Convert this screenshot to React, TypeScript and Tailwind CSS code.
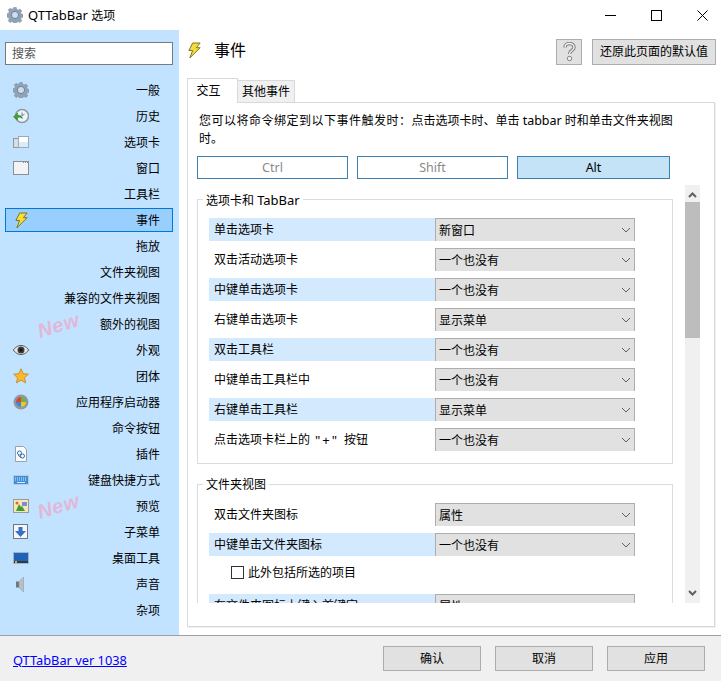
import { ReactNode } from "react";

function Gear({ size = 16 }: { size?: number }) {
  return (
    <svg width={size} height={size} viewBox="0 0 16 16">
      <path
        d="M6.7 0.5h2.6l.4 2 1.5.6 1.7-1.1 1.9 1.9-1.1 1.7.6 1.5 2 .4v2.6l-2 .4-.6 1.5 1.1 1.7-1.9 1.9-1.7-1.1-1.5.6-.4 2H6.7l-.4-2-1.5-.6-1.7 1.1-1.9-1.9 1.1-1.7-.6-1.5-2-.4V6.700l2-.4.6-1.5L1.200 3.100l1.900-1.900 1.700 1.100 1.500-.6z"
        fill="#8fa3b8"
        stroke="#74879b"
        strokeWidth="0.5"
      />
      <circle cx="8" cy="8" r="3.600" fill="#d3dce5" stroke="#6f8296" />
    </svg>
  );
}

function History() {
  return (
    <svg width="16" height="16" viewBox="0 0 16 16">
      <circle cx="9" cy="8" r="6.500" fill="#eef4f8" stroke="#8e9aa6" strokeWidth="1.500" />
      <path d="M9 4.500V8l2.500-2" fill="none" stroke="#6d7f90" />
      <path d="M0.500 9l4-4v2.200c3 0 4.500 1 5 3.300-1.500-1.200-3-1.500-5-1.200V12z" fill="#3aa52c" stroke="#1f7a1a" strokeWidth="0.500" />
    </svg>
  );
}

function TabIcon() {
  return (
    <svg width="16" height="16" viewBox="0 0 16 16">
      <rect x="0.500" y="4.500" width="6" height="9" fill="#d6dde3" stroke="#8f979e" />
      <rect x="5.500" y="2.500" width="10" height="11" fill="#ffffff" stroke="#a1a8ae" />
      <rect x="6" y="8" width="9" height="5" fill="#d9ecfb" />
    </svg>
  );
}

function WindowIcon() {
  return (
    <svg width="16" height="16" viewBox="0 0 16 16">
      <rect x="0.500" y="1.500" width="15" height="13" fill="#f3f3f5" stroke="#8e8e92" />
      <path d="M10 2.500h1M12 2.500h1M14 2.500h1" stroke="#8e8e92" />
    </svg>
  );
}

function Bolt() {
  return (
    <svg width="15" height="17" viewBox="0 0 16 18">
      <path d="M6 1h8l-4 5h4L3 17l3-8H2z" fill="#f7dc3c" stroke="#77701c" strokeLinejoin="round" />
    </svg>
  );
}

function Eye() {
  return (
    <svg width="16" height="16" viewBox="0 0 16 16">
      <path d="M0.300 8C3 4.500 5.500 3.500 8 3.500s5 1 7.700 4.500C13 11.500 10.500 12.500 8 12.500S3 11.500 0.300 8z" fill="#e8e8e8" stroke="#555555" />
      <circle cx="8" cy="8" r="3.500" fill="#3c3c3c" />
      <circle cx="8" cy="8" r="1.500" fill="#111111" />
    </svg>
  );
}

function Star() {
  return (
    <svg width="16" height="16" viewBox="0 0 16 16">
      <path d="M8 0.800l2.200 4.800 5.200.6-3.900 3.500 1.100 5.200L8 12.200l-4.600 2.700 1.100-5.200L.6 6.200l5.200-.6z" fill="#fbb82a" stroke="#b77c12" strokeWidth="0.700" />
    </svg>
  );
}

function Orb() {
  return (
    <svg width="16" height="16" viewBox="0 0 16 16">
      <circle cx="8" cy="8" r="7.500" fill="#8d9aa3" />
      <path d="M8 8V3a5 5 0 0 0-5 5z" fill="#e2412c" />
      <path d="M8 8V3a5 5 0 0 1 5 5z" fill="#6cb33f" />
      <path d="M8 8H3a5 5 0 0 0 5 5z" fill="#3b87d8" />
      <path d="M8 8h5a5 5 0 0 1-5 5z" fill="#f5c518" />
    </svg>
  );
}

function Plugin() {
  return (
    <svg width="16" height="16" viewBox="0 0 16 16">
      <path d="M2.500 0.500h8l3 3v12h-11z" fill="#fbfcfd" stroke="#9aa1a7" />
      <circle cx="6.500" cy="7" r="2" fill="none" stroke="#2f6fb0" />
      <circle cx="9.500" cy="10" r="2" fill="none" stroke="#2f6fb0" />
      <path d="M5 9l3 3" stroke="#5f7f9f" />
    </svg>
  );
}

function Keyboard() {
  return (
    <svg width="16" height="16" viewBox="0 0 16 16">
      <rect x="0.500" y="3.500" width="15" height="9" fill="#3f8edb" stroke="#b9cbd9" />
      <path d="M2 6h12M2 8h12" stroke="#dcecf9" strokeDasharray="1 1" />
      <path d="M4 10.500h8" stroke="#dcecf9" />
    </svg>
  );
}

function Picture() {
  return (
    <svg width="16" height="16" viewBox="0 0 16 16">
      <rect x="0.500" y="1.500" width="15" height="13" fill="#f3e8b6" stroke="#9a9a9a" />
      <rect x="9" y="4" width="5" height="4" fill="#8b86d8" />
      <path d="M3 13l3-7 2 3 1-1 3 5z" fill="#3e9c35" />
      <circle cx="4" cy="5" r="1.500" fill="#e5662a" />
    </svg>
  );
}

function DownArrow() {
  return (
    <svg width="16" height="16" viewBox="0 0 16 16">
      <rect x="0.500" y="0.500" width="14" height="14" fill="#f4f7fa" stroke="#6f7780" />
      <path d="M5.500 3h4v4H13l-5.500 6L2 7h3.500z" fill="#3a70c4" />
    </svg>
  );
}

function Monitor() {
  return (
    <svg width="16" height="16" viewBox="0 0 16 16">
      <rect x="0.500" y="2.500" width="15" height="11" fill="#1f63b8" stroke="#a5b4c2" />
      <rect x="1" y="11" width="14" height="2" fill="#303a45" />
      <rect x="2" y="11" width="2" height="2" fill="#e8a52c" />
    </svg>
  );
}

function Speaker() {
  return (
    <svg width="16" height="16" viewBox="0 0 16 16">
      <rect x="3" y="5.500" width="3" height="6" fill="#70767c" />
      <path d="M6 5.500L10.500 1v15L6 11.500z" fill="#b8bec4" stroke="#8f959b" strokeWidth="0.500" />
    </svg>
  );
}

function Chevron() {
  return (
    <svg width="10" height="6" viewBox="0 0 10 6" className="text-[#606060]">
      <path d="M1 1l4 4 4-4" fill="none" stroke="currentColor" />
    </svg>
  );
}

const helpGlyph = "M3 5.500C3 3 5 1.500 7.500 1.500S12 3 12 5.500c0 3-4.500 3-4.500 6.500";

function HelpIcon() {
  return (
    <svg width="15" height="20" viewBox="0 0 15 20">
      <path d={helpGlyph} fill="none" stroke="#7d7d7d" strokeWidth="3.400" />
      <path d={helpGlyph} fill="none" stroke="#f4f4f4" strokeWidth="1.400" />
      <circle cx="7.500" cy="16.500" r="2.200" fill="#f4f4f4" stroke="#7d7d7d" />
    </svg>
  );
}

const navItems: { label: string; icon?: ReactNode; active?: boolean }[] = [
  { label: "一般", icon: <Gear /> },
  { label: "历史", icon: <History /> },
  { label: "选项卡", icon: <TabIcon /> },
  { label: "窗口", icon: <WindowIcon /> },
  { label: "工具栏" },
  { label: "事件", icon: <Bolt />, active: true },
  { label: "拖放" },
  { label: "文件夹视图" },
  { label: "兼容的文件夹视图" },
  { label: "额外的视图" },
  { label: "外观", icon: <Eye /> },
  { label: "团体", icon: <Star /> },
  { label: "应用程序启动器", icon: <Orb /> },
  { label: "命令按钮" },
  { label: "插件", icon: <Plugin /> },
  { label: "键盘快捷方式", icon: <Keyboard /> },
  { label: "预览", icon: <Picture /> },
  { label: "子菜单", icon: <DownArrow /> },
  { label: "桌面工具", icon: <Monitor /> },
  { label: "声音", icon: <Speaker /> },
  { label: "杂项" },
];

function NewBadge({ className }: { className: string }) {
  return (
    <span
      className={`absolute left-[37px] -rotate-[17deg] text-[20px] leading-none font-bold italic tracking-[0.5px] text-[#e0b8da] ${className}`}
      style={{ fontFamily: '"Liberation Sans", sans-serif' }}
    >
      New
    </span>
  );
}

function Row({ label, value, shaded }: { label: ReactNode; value: string; shaded?: boolean }) {
  return (
    <div className="flex h-[23px] w-[426px]">
      <div className={`flex w-[226px] items-center pl-[5px] ${shaded ? "bg-[#d3e9fd]" : ""}`}>{label}</div>
      <div className="flex w-[200px] items-center justify-between border border-b-0 border-[#adadad] bg-[#e1e1e1] pl-[3px] pr-[3px]">
        <span className="pt-[1px]">{value}</span>
        <Chevron />
      </div>
    </div>
  );
}

function Group({ title, children, className }: { title: ReactNode; children: ReactNode; className: string }) {
  return (
    <div className={`relative w-[476px] border border-[#dcdcdc] pl-[11px] ${className}`}>
      <span className="absolute -top-[9px] left-[5px] bg-white px-[3px] leading-[18px]">{title}</span>
      {children}
    </div>
  );
}

const tabRows: [ReactNode, string][] = [
  ["单击选项卡", "新窗口"],
  ["双击活动选项卡", "一个也没有"],
  ["中键单击选项卡", "一个也没有"],
  ["右键单击选项卡", "显示菜单"],
  ["双击工具栏", "一个也没有"],
  ["中键单击工具栏中", "一个也没有"],
  ["右键单击工具栏", "显示菜单"],
  [
    <>
      点击选项卡栏上的<span className="px-[5px] text-[13px] tracking-[2px]">"+"</span>按钮
    </>,
    "一个也没有",
  ],
];

export default function App() {
  return (
    <div
      className="flex h-[681px] w-[721px] flex-col overflow-hidden bg-white text-[12px] leading-[18px] text-black"
      style={{ fontFamily: '"Noto Sans", "Noto Sans CJK SC", sans-serif' }}
    >
      {/* TITLE BAR */}
      <div className="flex h-[30px] items-center pl-[7px]">
        <Gear />
        <span className="ml-[5px] text-[13px]">
          QTTabBar <span className="text-[12px]">选项</span>
        </span>
        <div className="ml-auto -mr-[4px] flex items-center">
          <div className="flex w-[46px] justify-center">
            <svg width="11" height="11" viewBox="0 0 11 11"><path d="M0 5.500h11" stroke="#000" /></svg>
          </div>
          <div className="flex w-[46px] justify-center">
            <svg width="11" height="11" viewBox="0 0 11 11"><rect x="0.500" y="0.500" width="10" height="10" fill="none" stroke="#000" /></svg>
          </div>
          <div className="flex w-[46px] justify-center">
            <svg width="11" height="11" viewBox="0 0 11 11"><path d="M0.500 0.500l10 10M10.500 0.500l-10 10" stroke="#000" /></svg>
          </div>
        </div>
      </div>

      <div className="flex h-[605px]">
        {/* SIDEBAR */}
        <div className="relative w-[179px] bg-[#c2e3ff] pl-[5px] pr-[6px] pt-[12px]">
          <div className="flex h-[23px] w-[168px] items-center border border-[#7a7a7a] bg-white pl-[6px] text-[#555555]">搜索</div>
          <div className="mt-[13px] flex flex-col gap-[2px]">
            {navItems.map((item) => (
              <div
                key={item.label}
                className={`flex h-[24px] items-center justify-between border pl-[6px] pr-[12px] ${
                  item.active ? "border-[#0078d7] bg-[#99cfff]" : "border-transparent"
                }`}
              >
                <span className="flex w-[18px] justify-center">{item.icon}</span>
                <span className="pt-[1px]">{item.label}</span>
              </div>
            ))}
          </div>
          <NewBadge className="top-[285px]" />
          <NewBadge className="top-[466px]" />
        </div>

        {/* MAIN */}
        <div className="flex-1 pl-[8px] pr-[5px]">
          <div className="flex h-[48px] items-center pb-[4px]">
            <div className="flex items-center pb-[4px]">
              <Bolt />
              <span className="ml-[12px] text-[16px]">事件</span>
            </div>
            <div className="ml-auto flex gap-[10px]">
              <div className="flex h-[26px] w-[26px] items-center justify-center border border-[#adadad] bg-[#e1e1e1]">
                <HelpIcon />
              </div>
              <div className="flex h-[26px] w-[124px] items-center justify-center border border-[#adadad] bg-[#e1e1e1]">还原此页面的默认值</div>
            </div>
          </div>

          <div className="relative z-10 flex h-[24px] items-end">
            <div className="-mb-px flex h-[25px] w-[51px] items-center justify-center border border-b-0 border-[#d9d9d9] bg-white pr-[8px]">交互</div>
            <div className="flex h-[22px] w-[57px] items-center justify-center border border-l-0 border-b-0 border-[#d9d9d9] bg-[#f0f0f0]">其他事件</div>
          </div>

          <div className="h-[525px] w-[528px] border border-[#d9d9d9] pl-[9px] pt-[9px] shadow-[1px_1px_0_#f0f0f0]">
            <p className="w-[490px] pl-[2px]">
              <span className="tracking-[0.5px]">您可以将命令绑定到以下事件触发时：</span>点击选项卡时、单击 <span className="text-[12.5px]">tabbar</span> 时和单击文件夹视图
              <br />
              时。
            </p>

            <div className="mt-[8px] flex w-[473px] gap-[9px] text-[12.5px]">
              <div className="flex h-[23px] w-[151px] items-center justify-center border border-[#3c7fb1] text-[#8a8a8a]">Ctrl</div>
              <div className="flex h-[23px] w-[151px] items-center justify-center border border-[#3c7fb1] text-[#8a8a8a]">Shift</div>
              <div className="flex h-[23px] w-[153px] items-center justify-center border border-[#3c7fb1] bg-[#c4e3f7]">Alt</div>
            </div>

            <div className="mt-[6px] flex h-[418px] w-[503px] justify-between overflow-hidden">
              <div className="pt-[14px]">
                <Group
                  title={
                    <>
                      选项卡和 <span className="text-[13px]">TabBar</span>
                    </>
                  }
                  className="flex h-[265px] flex-col gap-[7px] pt-[18px]"
                >
                  {tabRows.map(([label, value], i) => (
                    <Row key={i} label={label} value={value} shaded={i % 2 === 0} />
                  ))}
                </Group>
                <Group title="文件夹视图" className="mt-[20px] h-[200px] pt-[18px]">
                  <Row label="双击文件夹图标" value="属性" />
                  <div className="mt-[7px]">
                    <Row label="中键单击文件夹图标" value="一个也没有" shaded />
                  </div>
                  <label className="ml-[22px] mt-[5px] flex h-[23px] items-center">
                    <span className="mr-[4px] h-[13px] w-[13px] border border-[#333333] bg-white" />
                    此外包括所选的项目
                  </label>
                  <div className="mt-[10px]">
                    <Row label="在文件夹图标上键入首键字" value="属性" shaded />
                  </div>
                </Group>
              </div>

              {/* SCROLLBAR */}
              <div className="relative flex h-full w-[15px] flex-col items-center justify-between bg-[#f0f0f0] py-[7px]">
                <svg width="9" height="6" viewBox="0 0 9 6"><path d="M1 5l3.500-3.500L8 5" fill="none" stroke="#606060" strokeWidth="2" /></svg>
                <div className="absolute left-0 top-[17px] h-[136px] w-full bg-[#bdbdbd]" />
                <svg width="9" height="6" viewBox="0 0 9 6"><path d="M1 1l3.500 3.500L8 1" fill="none" stroke="#606060" strokeWidth="2" /></svg>
              </div>
            </div>
          </div>
        </div>
      </div>

      {/* FOOTER */}
      <div className="flex h-[46px] items-center justify-between border-t border-[#a0a0a0] bg-[#f0f0f0] pl-[13px] pr-[16px]">
        <a className="pt-[2px] text-[12.8px] text-[#0000ff] underline">QTTabBar ver 1038</a>
        <div className="flex gap-[14px]">
          {["确认", "取消", "应用"].map((label) => (
            <div key={label} className="flex h-[25px] w-[98px] items-center justify-center border border-[#adadad] bg-[#e1e1e1]">{label}</div>
          ))}
        </div>
      </div>
    </div>
  );
}
